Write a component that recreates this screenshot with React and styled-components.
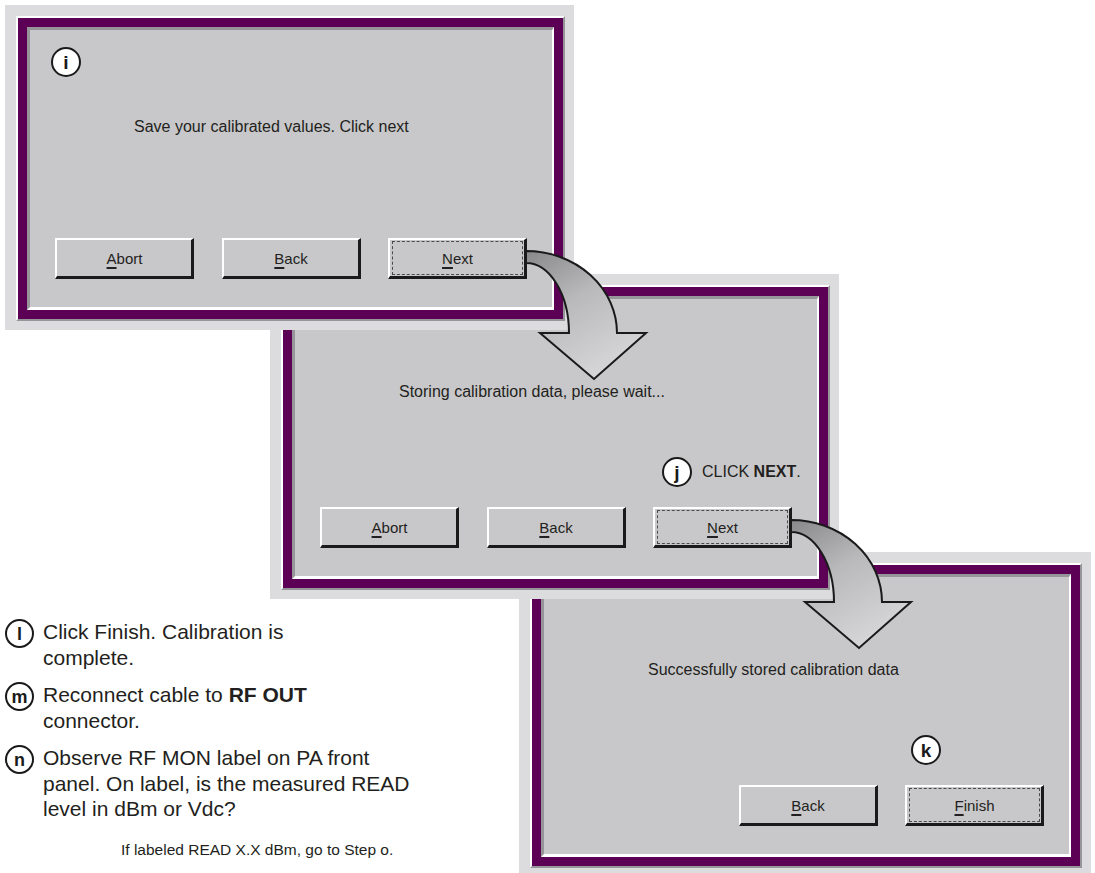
import React from 'react';
import styled, { createGlobalStyle } from 'styled-components';

const Global = createGlobalStyle`
  html, body { margin: 0; padding: 0; background: #ffffff; }
  body { font-family: "Liberation Sans", Arial, Helvetica, sans-serif; color: #231f20; }
`;

const Canvas = styled.div`
  position: relative;
  width: 1095px;
  height: 873px;
  overflow: hidden;
  background: #ffffff;
`;

const Window = styled.div`
  position: absolute;
  left: ${(p) => p.$x}px;
  top: ${(p) => p.$y}px;
  z-index: ${(p) => p.$z};
  width: ${(p) => p.$w || 569}px;
  height: 325px;
  box-sizing: border-box;
  background: #dcdcde;
  padding: 11px 9px 9px 11px;
  display: flex;
`;

const Frame = styled.div`
  flex: 1;
  min-width: 0;
  display: flex;
  background: #5b0055;
  padding: 9px;
  border: 2px solid;
  border-color: #ffffff #96969a #96969a #ffffff;
`;

const Pane = styled.div`
  flex: 1;
  min-width: 0;
  display: flex;
  flex-direction: column;
  background: #c8c8ca;
  border-style: solid;
  border-width: 3px 2px 3px 3px;
  border-color: #96969a #ffffff #ffffff #96969a;
  padding: 17px 25px 28px;
`;

const BadgeSlot = styled.div`
  height: 30px;
  display: flex;
  align-items: center;
  margin-left: -4px;
`;

const Badge = styled.span`
  width: ${(p) => p.$size || 30}px;
  height: ${(p) => p.$size || 30}px;
  box-sizing: border-box;
  border: 2px solid #1a1a1a;
  border-radius: 50%;
  background: #ffffff;
  display: inline-flex;
  align-items: center;
  justify-content: center;
  font-weight: 700;
  font-size: ${(p) => p.$font || 19}px;
  line-height: 1;
  color: #1a1a1a;
  flex: none;
`;

const Message = styled.p`
  margin: ${(p) => p.$top}px 0 0 79px;
  font-size: 16px;
  line-height: 20px;
  white-space: nowrap;
`;

const Callout = styled.div`
  margin-top: auto;
  margin-bottom: 20px;
  margin-left: 342px;
  height: 30px;
  width: 0;
  display: flex;
  align-items: center;
  gap: 10px;
  font-size: 16px;
  white-space: nowrap;
`;

const ButtonRow = styled.div`
  display: flex;
  justify-content: flex-end;
  gap: 27.5px;
`;

const Button = styled.div`
  position: relative;
  width: 139px;
  height: 41px;
  box-sizing: border-box;
  border-style: solid;
  border-width: 2px 3px 3px 2px;
  border-color: #ffffff #1a1a1a #1a1a1a #ffffff;
  padding: 1px 1px 1px 2px;
  display: flex;
  background: #c8c8ca;
`;

const ButtonFace = styled.span`
  flex: 1;
  display: flex;
  align-items: center;
  justify-content: center;
  border: 1px dashed ${(p) => (p.$focused ? '#4a4a4a' : 'transparent')};
  font-size: 15px;
  color: #231f20;
`;

const Key = styled.span`
  text-decoration: underline;
  text-decoration-thickness: 2px;
  text-underline-offset: 3px;
`;

const ArrowSvg = styled.svg`
  position: absolute;
  left: calc(100% + 2px);
  top: -2px;
  overflow: visible;
  pointer-events: none;
  z-index: 10;
`;

const Notes = styled.div`
  position: absolute;
  left: 5px;
  top: 619px;
  width: 480px;
  display: flex;
  flex-direction: column;
  gap: 12px;
  font-size: 21px;
  line-height: 25.5px;
  color: #231f20;
`;

const Note = styled.div`
  display: flex;
  align-items: flex-start;
  gap: 9px;
`;

const NoteText = styled.div`
  white-space: nowrap;
`;

const FollowUp = styled.p`
  margin: 6px 0 0 116px;
  font-size: 15.5px;
  line-height: 20px;
  white-space: nowrap;
`;

function FlowArrow({ id }) {
  return (
    <ArrowSvg width="130" height="145" viewBox="0 0 130 145">
      <defs>
        <linearGradient id={id} x1="0" y1="0" x2="0.55" y2="1">
          <stop offset="0" stopColor="#88888b" />
          <stop offset="0.45" stopColor="#b9b9bc" />
          <stop offset="1" stopColor="#d6d6d8" />
        </linearGradient>
      </defs>
      <path
        d="M0 13 A 91 82 0 0 1 91 95 L 120 95 L 68 141 L 14 95 L 43 95 A 43 70 0 0 0 0 25 Z"
        fill={`url(#${id})`}
        stroke="#1a1a1a"
        strokeWidth="2"
        strokeLinejoin="miter"
      />
    </ArrowSvg>
  );
}

function DialogButton({ label, focused, arrow }) {
  const [first, ...rest] = label;
  return (
    <Button>
      <ButtonFace $focused={focused}>
        <Key>{first}</Key>
        {rest.join('')}
      </ButtonFace>
      {arrow && <FlowArrow id={arrow} />}
    </Button>
  );
}

function Dialog({ x, y, z, w, badge, message, top, callout, buttons }) {
  return (
    <Window $x={x} $y={y} $z={z} $w={w}>
      <Frame>
        <Pane>
          <BadgeSlot>{badge && <Badge>{badge}</Badge>}</BadgeSlot>
          <Message $top={top}>{message}</Message>
          <Callout>
            {callout && (
              <>
                <Badge>{callout.letter}</Badge>
                {callout.text && <span>{callout.text}</span>}
              </>
            )}
          </Callout>
          <ButtonRow>
            {buttons.map((b) => (
              <DialogButton key={b.label} {...b} />
            ))}
          </ButtonRow>
        </Pane>
      </Frame>
    </Window>
  );
}

export default function App() {
  return (
    <>
      <Global />
      <Canvas>
        <Dialog
          x={5}
          y={5}
          z={3}
          badge="i"
          top={40}
          message="Save your calibrated values. Click next"
          buttons={[
            { label: 'Abort' },
            { label: 'Back' },
            { label: 'Next', focused: true, arrow: 'arrowGradA' },
          ]}
        />
        <Dialog
          x={270}
          y={274}
          z={2}
          top={36}
          message="Storing calibration data, please wait..."
          callout={{
            letter: 'j',
            text: (
              <>
                CLICK <b>NEXT</b>.
              </>
            ),
          }}
          buttons={[
            { label: 'Abort' },
            { label: 'Back' },
            { label: 'Next', focused: true, arrow: 'arrowGradB' },
          ]}
        />
        <Dialog
          x={519}
          y={552}
          z={1}
          w={572}
          top={36}
          message="Successfully stored calibration data"
          callout={{ letter: 'k' }}
          buttons={[{ label: 'Back' }, { label: 'Finish', focused: true }]}
        />
        <Notes>
          <Note>
            <Badge $size={29} $font={18}>l</Badge>
            <NoteText>
              Click Finish. Calibration is
              <br />
              complete.
            </NoteText>
          </Note>
          <Note>
            <Badge $size={29} $font={18}>m</Badge>
            <NoteText>
              Reconnect cable to <b>RF OUT</b>
              <br />
              connector.
            </NoteText>
          </Note>
          <Note>
            <Badge $size={29} $font={18}>n</Badge>
            <NoteText>
              Observe RF MON label on PA front
              <br />
              panel. On label, is the measured READ
              <br />
              level in dBm or Vdc?
            </NoteText>
          </Note>
          <FollowUp>If labeled READ X.X dBm, go to Step o.</FollowUp>
        </Notes>
      </Canvas>
    </>
  );
}
